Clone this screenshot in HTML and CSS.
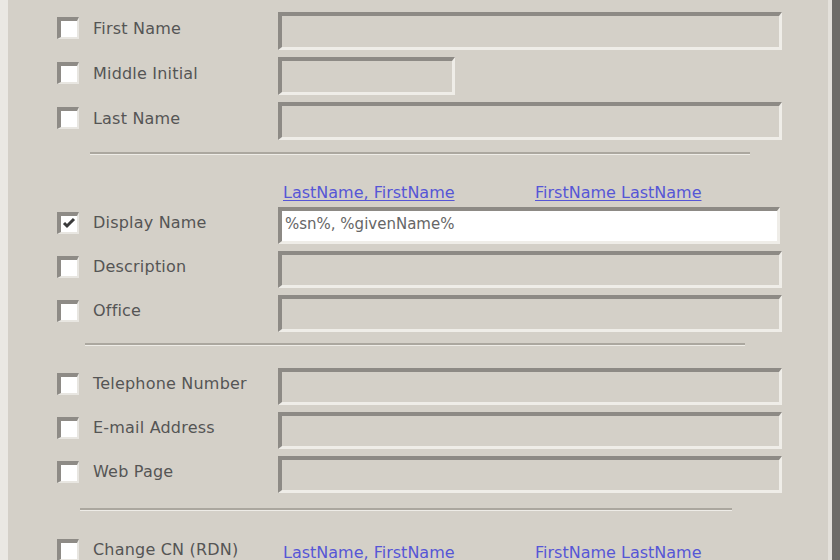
FILE: index.html
```html
<!DOCTYPE html>
<html lang="en">
<head>
	<meta charset="UTF-8">
	<title>User properties</title>
	<link rel="stylesheet" href="styles.css">
</head>
<body>
	<div class="dialog">
		<div class="row first">
			<span class="check"></span>
			<span class="label">First Name</span>
			<span class="field"></span>
		</div>
		<div class="row first">
			<span class="check"></span>
			<span class="label">Middle Initial</span>
			<span class="field short"></span>
		</div>
		<div class="row first">
			<span class="check"></span>
			<span class="label">Last Name</span>
			<span class="field"></span>
		</div>

		<div class="sep sep1"></div>

		<div class="links">
			<a href="#">LastName, FirstName</a>
			<a href="#">FirstName LastName</a>
		</div>
		<div class="row">
			<span class="check on">
				<svg width="16" height="16" viewBox="0 0 16 16"><path d="M3 7 L6 10 L13 3" fill="none" stroke="#3a3a3a" stroke-width="3"/></svg>
			</span>
			<span class="label">Display Name</span>
			<span class="field white">%sn%, %givenName%</span>
		</div>
		<div class="row">
			<span class="check"></span>
			<span class="label">Description</span>
			<span class="field"></span>
		</div>
		<div class="row">
			<span class="check"></span>
			<span class="label">Office</span>
			<span class="field"></span>
		</div>

		<div class="sep sep2"></div>

		<div class="row">
			<span class="check"></span>
			<span class="label">Telephone Number</span>
			<span class="field"></span>
		</div>
		<div class="row">
			<span class="check"></span>
			<span class="label">E-mail Address</span>
			<span class="field"></span>
		</div>
		<div class="row">
			<span class="check"></span>
			<span class="label">Web Page</span>
			<span class="field"></span>
		</div>

		<div class="sep sep3"></div>

		<div class="row last">
			<span class="check"></span>
			<span class="label">Change CN (RDN)</span>
			<div class="links inline">
				<a href="#">LastName, FirstName</a>
				<a href="#">FirstName LastName</a>
			</div>
		</div>
	</div>
</body>
</html>
```

FILE: styles.css
```css
*{
	margin: 0;
	padding: 0;
	box-sizing: border-box;
}
body{
	background-color: #d4d0c8;
	font-family: "DejaVu Sans", "Liberation Sans", sans-serif;
	font-size: 16px;
	color: #555;
}
.dialog{
	display: flex;
	flex-direction: column;
	height: 560px;
	overflow: hidden;
	border-left: 8px solid #eae8e3;
	border-right: 8px solid #6e6c68;
	box-shadow: inset -4px 0 0 #e4e1db;
	padding: 12px 0 0 49px;
}
.row{
	flex: none;
	display: flex;
	align-items: center;
	height: 37px;
	margin-bottom: 7px;
}
.row.first{
	height: 38px;
}
.check{
	flex: none;
	width: 22px;
	height: 22px;
	margin-bottom: 6px;
	background-color: #fff;
	border-top: 4px solid #8e8b86;
	border-left: 4px solid #8e8b86;
	border-right: 2px solid #e8e6e1;
	border-bottom: 2px solid #e8e6e1;
}
.check svg{
	display: block;
}
.label{
	flex: none;
	width: 185px;
	margin-left: 14px;
	margin-bottom: 6px;
	white-space: nowrap;
	letter-spacing: 0.2px;
}
.field{
	flex: none;
	width: 504px;
	height: 100%;
	background-color: #d4d0c8;
	border-top: 4px solid #8d8a85;
	border-left: 4px solid #8d8a85;
	border-right: 3px solid #efede8;
	border-bottom: 3px solid #efede8;
	padding: 4px 0 0 3px;
	font-size: 15px;
	color: #666;
	white-space: nowrap;
}
.field.short{
	width: 177px;
}
.field.white{
	width: 502px;
	background-color: #fff;
}
.sep{
	flex: none;
	height: 3px;
	border-top: 2px solid #aba79f;
	border-bottom: 1px solid #eeece7;
}
.sep1{
	margin: 5px 82px 0 33px;
}
.sep2{
	margin: 4px 87px 0 28px;
}
.sep3{
	margin: 8px 100px 0 23px;
}
.links{
	flex: none;
	display: grid;
	grid-template-columns: 252px auto;
	align-items: end;
	height: 26px;
	margin: 21px 0 5px;
	padding-left: 226px;
}
.links a{
	justify-self: start;
	color: #5656d6;
	text-decoration: underline;
	text-underline-offset: 2px;
	white-space: nowrap;
}
.links.inline{
	height: auto;
	margin: 0;
	padding-left: 5px;
}
.sep2 + .row{
	margin-top: 22px;
}
.row.last{
	margin-top: 23px;
}
```
